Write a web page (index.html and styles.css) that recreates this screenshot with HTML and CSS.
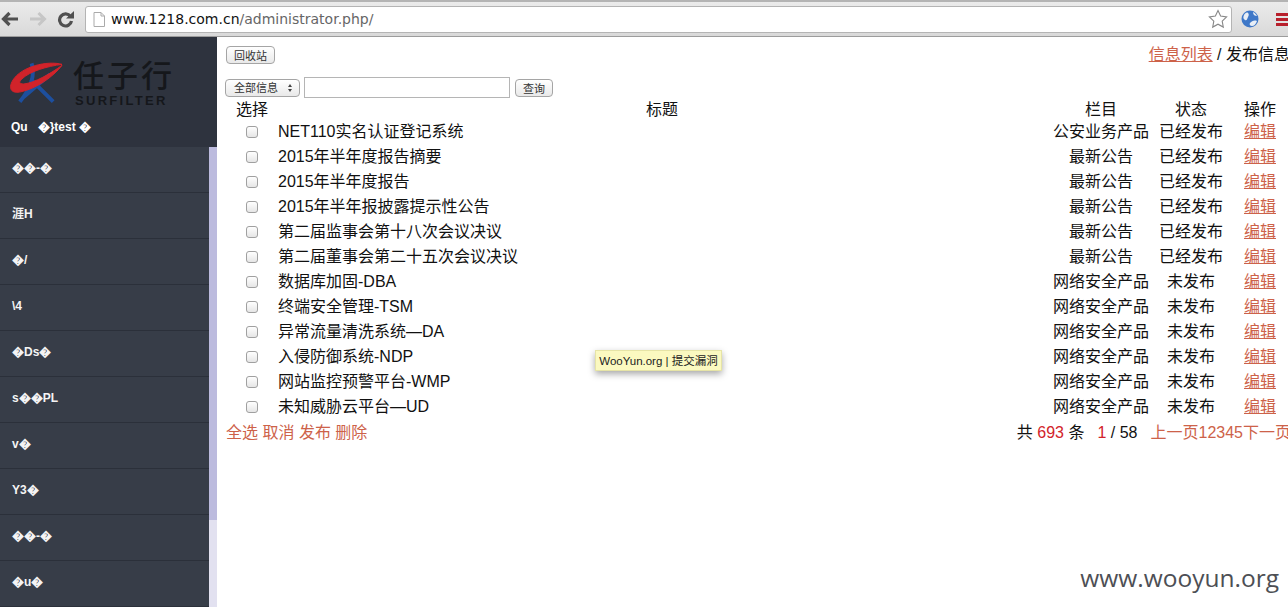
FILE: index.html
```html
<!DOCTYPE html>
<html lang="zh">
<head>
<meta charset="utf-8">
<title>administrator</title>
<link rel="stylesheet" href="styles.css">
</head>
<body>
<header class="chrome">
  <svg class="nav-icon back" viewBox="0 0 18 16"><path d="M8.500 2 2.500 8l6 6M3 8h14" fill="none" stroke="#505050" stroke-width="3.200"/></svg>
  <svg class="nav-icon fwd" viewBox="0 0 18 16"><path d="M9.500 2l6 6-6 6M15 8H1" fill="none" stroke="#c6c6c6" stroke-width="3"/></svg>
  <svg class="nav-icon reload" viewBox="0 0 17 17"><path d="M13.500 5.500A6 6 0 1 0 14.500 10" fill="none" stroke="#505050" stroke-width="3.200"/><path d="M9 7.500h8V0z" fill="#505050"/></svg>
  <div class="omnibox">
    <svg class="page-icon" viewBox="0 0 12 15"><path d="M1 .5h7l3.500 3.500v10.500H1zM8 .5V4h3.500" fill="#fff" stroke="#aaa"/></svg>
    <span class="url"><b>www.1218.com.cn</b>/administrator.php/</span>
    <svg class="star" viewBox="0 0 20 20"><path d="M10 1.500l2.600 5.600 6 .8-4.400 4.200 1.100 6L10 15.200 4.700 18.100l1.100-6L1.400 7.900l6-.8z" fill="#fff" stroke="#888" stroke-width="1.100"/></svg>
  </div>
  <svg class="globe" viewBox="0 0 18 18"><circle cx="9" cy="9" r="8.500" fill="#3f78c8"/><path d="M3 5c1-2 3-3 4-2s1 2 0 4-1 4-3 3-2-3-1-5zM9 13c2-2 4-3 7-2-1 3-3 5-5 5s-3-2-2-3zM12 2c2 1 3 2 4 4-2 0-4-1-4-4z" fill="#e8eef6"/></svg>
  <div class="menu-btn"><i></i><i></i><i></i></div>
</header>
<div class="body-row">
  <aside class="sidebar">
    <div class="brand">
      <div class="logo">
        <svg class="logo-mark" viewBox="0 0 54 42"><path d="M22 1C26 14 20 28 10 40M21 17l23 23M41 12 13 36" fill="none" stroke="#1d4f9e" stroke-width="4"/><path d="M53 2C38-2 12 4 3 18-3 28 3 32 11 30 26 27 44 15 53 3 42 11 25 21 14 22 9 22 9 20 12 17 20 9 38 4 53 2z" fill="#d1232a" stroke="#d1232a"/></svg>
        <div class="logo-text"><span class="logo-cn">任子行</span><span class="logo-en">SURFILTER</span></div>
      </div>
      <div class="user">Qu&nbsp;&nbsp;&nbsp;�}test �</div>
    </div>
    <div class="menu-wrap">
      <nav class="menu">
        <div class="menu-item">��-�</div>
        <div class="menu-item">涯H</div>
        <div class="menu-item">�/</div>
        <div class="menu-item">\4</div>
        <div class="menu-item">�Ds�</div>
        <div class="menu-item">s��PL</div>
        <div class="menu-item">v�</div>
        <div class="menu-item">Y3�</div>
        <div class="menu-item">��-�</div>
        <div class="menu-item">�u�</div>
      </nav>
      <div class="scrollbar"><div class="thumb"></div></div>
    </div>
  </aside>
  <main class="content">
    <div class="inner">
      <div class="top-line">
        <button class="btn recycle">回收站</button>
        <div class="crumb"><a href="#">信息列表</a> / 发布信息管理</div>
      </div>
      <form class="search">
        <span class="select">全部信息<span class="arrows"></span></span>
        <input class="query" type="text">
        <button class="btn">查询</button>
      </form>
      <table class="list">
        <thead>
          <tr><th class="c-sel">选择</th><th class="c-title">标题</th><th class="c-cat">栏目</th><th class="c-st">状态</th><th class="c-op">操作</th></tr>
        </thead>
        <tbody>
          <tr><td class="c-sel"><span class="cb"></span></td><td class="t">NET110实名认证登记系统</td><td>公安业务产品</td><td>已经发布</td><td><a href="#">编辑</a></td></tr>
          <tr><td class="c-sel"><span class="cb"></span></td><td class="t">2015年半年度报告摘要</td><td>最新公告</td><td>已经发布</td><td><a href="#">编辑</a></td></tr>
          <tr><td class="c-sel"><span class="cb"></span></td><td class="t">2015年半年度报告</td><td>最新公告</td><td>已经发布</td><td><a href="#">编辑</a></td></tr>
          <tr><td class="c-sel"><span class="cb"></span></td><td class="t">2015年半年报披露提示性公告</td><td>最新公告</td><td>已经发布</td><td><a href="#">编辑</a></td></tr>
          <tr><td class="c-sel"><span class="cb"></span></td><td class="t">第二届监事会第十八次会议决议</td><td>最新公告</td><td>已经发布</td><td><a href="#">编辑</a></td></tr>
          <tr><td class="c-sel"><span class="cb"></span></td><td class="t">第二届董事会第二十五次会议决议</td><td>最新公告</td><td>已经发布</td><td><a href="#">编辑</a></td></tr>
          <tr><td class="c-sel"><span class="cb"></span></td><td class="t">数据库加固-DBA</td><td>网络安全产品</td><td>未发布</td><td><a href="#">编辑</a></td></tr>
          <tr><td class="c-sel"><span class="cb"></span></td><td class="t">终端安全管理-TSM</td><td>网络安全产品</td><td>未发布</td><td><a href="#">编辑</a></td></tr>
          <tr><td class="c-sel"><span class="cb"></span></td><td class="t">异常流量清洗系统—DA</td><td>网络安全产品</td><td>未发布</td><td><a href="#">编辑</a></td></tr>
          <tr><td class="c-sel"><span class="cb"></span></td><td class="t">入侵防御系统-NDP</td><td>网络安全产品</td><td>未发布</td><td><a href="#">编辑</a></td></tr>
          <tr><td class="c-sel"><span class="cb"></span></td><td class="t">网站监控预警平台-WMP</td><td>网络安全产品</td><td>未发布</td><td><a href="#">编辑</a></td></tr>
          <tr><td class="c-sel"><span class="cb"></span></td><td class="t">未知威胁云平台—UD</td><td>网络安全产品</td><td>未发布</td><td><a href="#">编辑</a></td></tr>
        </tbody>
      </table>
      <div class="foot">
        <div class="actions">全选 取消 发布 删除</div>
        <div class="pager">共 <em>693</em> 条<span class="gap"></span><em>1</em> / 58<span class="gap"></span><span class="links">上一页12345下一页</span></div>
      </div>
    </div>
  </main>
</div>
<div class="tooltip">WooYun.org | 提交漏洞</div>
<div class="watermark">www.wooyun.org</div>
</body>
</html>
```
FILE: styles.css
```css
* { box-sizing: border-box; }
html, body { margin: 0; height: 100%; overflow: hidden; }
body {
  width: 1288px; height: 607px; position: relative; background: #fff; color: #111;
  font-family: "Liberation Sans", "Noto Sans CJK SC", sans-serif; font-size: 16px;
}
.chrome {
  height: 37px; display: flex; align-items: center; padding: 0 0 0 1px;
  background: linear-gradient(#ebebeb, #d9d9d9); border-top: 2px solid #b4b4b4; border-bottom: 1px solid #9c9c9c;
}
.nav-icon { display: block; flex: none; }
.back { width: 18px; height: 16px; }
.fwd { width: 18px; height: 16px; margin-left: 10px; }
.reload { width: 17px; height: 17px; margin-left: 10px; }
.omnibox {
  flex: none; width: 1147px; height: 27px; margin-left: 11px; padding: 0 3px 0 7px;
  display: flex; align-items: center; background: #fff;
  border: 1px solid #b4b4b4; border-radius: 3px;
}
.page-icon { width: 12px; height: 15px; flex: none; }
.url { margin-left: 6px; font-family: "DejaVu Sans", sans-serif; font-size: 14px; color: #666; white-space: nowrap; }
.url b { font-weight: 400; color: #111; }
.star { width: 20px; height: 20px; margin-left: auto; }
.globe { width: 18px; height: 18px; margin-left: 9px; flex: none; }
.menu-btn { width: 14px; margin-left: 17px; display: flex; flex-direction: column; gap: 2px; flex: none; }
.menu-btn i { display: block; height: 3px; background: #b8202c; }

.body-row { display: flex; height: 570px; }
.sidebar { width: 217px; flex: none; display: flex; flex-direction: column; background: #fff; }
.brand { height: 110px; width: 217px; background: #2e333e; position: relative; flex: none; }
.logo { display: flex; align-items: flex-start; padding: 25px 0 0 10px; }
.logo-mark { width: 53px; height: 42px; flex: none; }
.logo-text { display: flex; flex-direction: column; margin-left: 10px; color: #15171b; }
.logo-cn { font-size: 31px; line-height: 30px; letter-spacing: 3px; font-weight: 500; white-space: nowrap; }
.logo-en { font-size: 13px; line-height: 13px; margin: 2px 0 0 2px; font-weight: 700; letter-spacing: 2.300px; }
.user { color: #fff; font-size: 12px; font-weight: 700; position: absolute; left: 11px; top: 81px; white-space: pre; }
.menu-wrap { display: flex; flex: 1; min-height: 0; }
.menu { width: 209px; background: #373d48; overflow: hidden; }
.menu-item {
  height: 46px; padding: 0 0 0 12px; line-height: 43px; color: #f4f4f4;
  font-size: 12px; font-weight: 700; border-bottom: 1px solid #2b303a;
}
.scrollbar { width: 8px; background: #e2e1f0; }
.thumb { height: 373px; background: #bcbbde; }

.content { flex: 1; min-width: 0; overflow: hidden; }
.inner { width: 1105px; padding: 0 0 0 9px; }
.top-line { display: flex; justify-content: space-between; align-items: center; padding: 1px 0 0 0; height: 35px; }
.crumb { white-space: nowrap; font-size: 16px; margin-bottom: 4px; }
a, .links, .actions { color: #cd6249; }
.btn {
  font: 11px "Liberation Sans", "Noto Sans CJK SC", sans-serif; color: #333; height: 18px; padding: 0 7px;
  background: linear-gradient(#fff, #e9e9e9); border: 1px solid #a5a5a5; border-radius: 4px;
}
.search { display: flex; align-items: center; height: 21px; margin: 5px 0 0 -1px; }
.select {
  width: 75px; height: 18px; padding-left: 8px; line-height: 16px; font-size: 11px; color: #333; position: relative;
  border: 1px solid #a5a5a5; border-radius: 4px; background: linear-gradient(#fff, #e9e9e9);
}
.arrows { position: absolute; right: 6px; top: 4px; width: 5px; height: 8px; }
.arrows::before, .arrows::after {
  content: ""; position: absolute; left: 0; width: 0; height: 0;
  border-left: 2.500px solid transparent; border-right: 2.500px solid transparent;
}
.arrows::before { top: 0; border-bottom: 3px solid #444; }
.arrows::after { bottom: 0; border-top: 3px solid #444; }
.query { width: 206px; height: 21px; margin: 0 5px 0 4px; border: 1px solid #b5b5b5; background: #fff; padding: 0; }
.list { border-collapse: collapse; table-layout: fixed; width: 1068px; margin-top: 2px; }
.list th { font-weight: 400; font-size: 16px; height: 19px; padding: 0; color: #111; line-height: 19px; }
.list td { height: 25px; padding: 0; text-align: center; font-size: 16px; line-height: 25px; white-space: nowrap; }
.c-sel { width: 52px; }
.c-title { width: 768px; }
.c-cat { width: 110px; }
.c-st { width: 70px; }
.c-op { width: 68px; }
.list td.t { text-align: left; }
.list td a { text-decoration: underline; }
.cb {
  display: inline-block; width: 12px; height: 12px; vertical-align: -1px;
  border: 1px solid #a0a0a0; border-radius: 3px; background: linear-gradient(#fff, #e6e6e6);
}
.foot { display: flex; justify-content: space-between; width: 1065px; height: 26px; line-height: 28px; white-space: nowrap; }
em { font-style: normal; color: #d2232a; }
.gap { display: inline-block; width: 13px; }
.tooltip {
  position: absolute; left: 595px; top: 350px; width: 127px; height: 21px; text-align: center;
  background: #fbf9c0; font-size: 11.500px; line-height: 20px; color: #222; white-space: nowrap;
  box-shadow: 0 3px 7px rgba(0,0,0,.35); border: 1px solid #e6e4a6;
}
.watermark {
  position: absolute; right: 9px; top: 561px; color: #4d4f55;
  font-family: "Open Sans", sans-serif; font-size: 24.500px;
}
```
